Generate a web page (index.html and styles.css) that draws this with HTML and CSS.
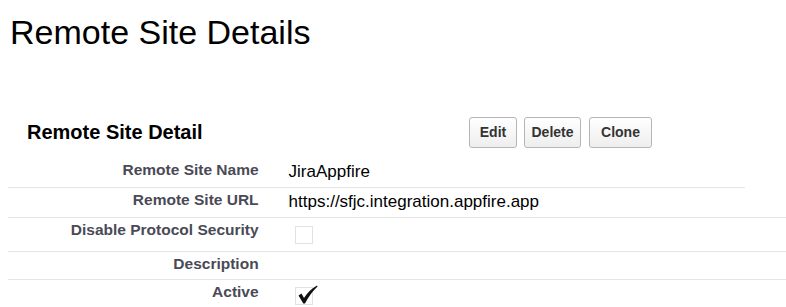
FILE: index.html
```html
<!DOCTYPE html>
<html lang="en">
<head>
  <meta charset="UTF-8">
  <meta name="viewport" content="width=device-width, initial-scale=1.0">
  <title>Remote Site Details</title>
  <link rel="stylesheet" href="styles.css">
</head>
<body>
  <h1 class="page-title">Remote Site Details</h1>
  <div class="detail-block">
    <div class="block-header">
      <h2 class="block-title">Remote Site Detail</h2>
      <div class="block-buttons">
        <button class="btn btn-edit">Edit</button>
        <button class="btn btn-delete">Delete</button>
        <button class="btn btn-clone">Clone</button>
      </div>
    </div>
    <table class="detail-list">
      <tr class="first-row">
        <td class="label-col">Remote Site Name</td>
        <td class="data-col">JiraAppfire</td>
        <td class="extra-col"></td>
      </tr>
      <tr>
        <td class="label-col">Remote Site URL</td>
        <td class="data-col">https://sfjc.integration.appfire.app</td>
        <td class="extra-col"></td>
      </tr>
      <tr>
        <td class="label-col">Disable Protocol Security</td>
        <td class="data-col check-cell">
          <svg class="checkbox" width="19" height="19" viewBox="0 0 19 19">
            <rect x="0.5" y="0.5" width="17" height="17" fill="none" stroke="#c4c4c4" stroke-dasharray="1 1"/>
          </svg>
        </td>
        <td class="extra-col"></td>
      </tr>
      <tr>
        <td class="label-col">Description</td>
        <td class="data-col"></td>
        <td class="extra-col"></td>
      </tr>
      <tr>
        <td class="label-col">Active</td>
        <td class="data-col check-cell">
          <svg class="checkbox checked" width="23" height="24" viewBox="0 0 23 24">
            <rect x="0.5" y="5.5" width="17" height="17" fill="none" stroke="#c4c4c4" stroke-dasharray="1 1"/>
            <path d="M3.5 13.5 L6.5 11.5 L9 16 Q14 8 22 3.5 L22.5 4.5 Q15.5 11 10 21.5 L8.3 21.5 Z" fill="#111"/>
          </svg>
        </td>
        <td class="extra-col"></td>
      </tr>
    </table>
  </div>
</body>
</html>
```

FILE: styles.css
```css
body {
  margin: 0;
  padding: 0 0 0 8px;
  background-color: white;
  color: black;
  font-family: "Liberation Sans", Arial, sans-serif;
}
.page-title {
  font-size: 34px;
  font-weight: normal;
  margin: 0;
  padding: 13px 0 0 2px;
  line-height: 38px;
}
.detail-block {
  margin-top: 63px;
}
.block-header {
  display: flex;
  align-items: center;
  padding-left: 19px;
  height: 36px;
}
.block-title {
  width: 442px;
  margin: 0;
  font-size: 20px;
  font-weight: bold;
}
.block-buttons {
  display: flex;
  gap: 7px;
}
.btn {
  font-family: "Liberation Sans", Arial, sans-serif;
  font-size: 14px;
  font-weight: bold;
  color: #333;
  height: 31px;
  padding: 0;
  border: 1px solid #b5b5b5;
  border-radius: 3px;
  background: linear-gradient(#ffffff, #eeeeee);
  cursor: pointer;
}
.btn-edit {
  width: 48px;
}
.btn-delete {
  width: 57px;
}
.btn-clone {
  width: 63px;
  margin-left: 1px;
}
.detail-list {
  border-collapse: collapse;
  width: 778px;
  margin-top: 8px;
}
.detail-list td {
  border-bottom: 1px solid #e6e6e6;
  vertical-align: top;
  padding: 4px 0 6px 0;
}
.first-row .extra-col {
  border-bottom: none;
}
.label-col {
  width: 253px;
  padding-right: 13px !important;
  padding-top: 3px !important;
  padding-bottom: 7px !important;
  text-align: right;
  font-size: 15.5px;
  font-weight: bold;
  color: #4a4a56;
  line-height: 17px;
}
.data-col {
  width: 453px;
  padding-left: 17px !important;
  font-size: 17px;
  line-height: 19px;
}
.extra-col {
  width: 42px;
}
.check-cell {
  padding-left: 23px !important;
  padding-top: 8px !important;
  padding-bottom: 6px !important;
}
.checkbox {
  display: block;
}
.checkbox.checked {
  margin-top: -6px;
}
```
